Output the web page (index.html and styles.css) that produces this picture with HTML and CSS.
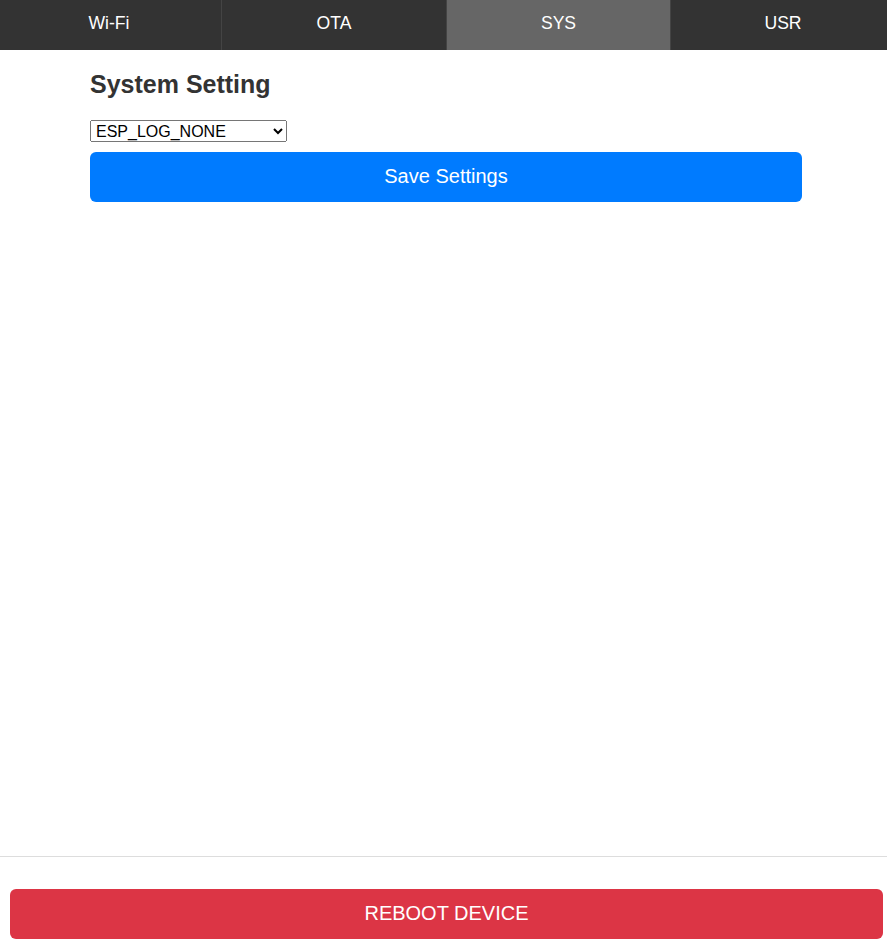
FILE: index.html
```html
<!DOCTYPE html>
<html>
<head>
<meta charset="utf-8">
<link rel="stylesheet" href="styles.css">
</head>
<body>
<div class="page">
  <nav class="tabs">
    <a class="tab tab-wifi">Wi-Fi</a>
    <a class="tab tab-ota">OTA</a>
    <a class="tab tab-sys active">SYS</a>
    <a class="tab tab-usr">USR</a>
  </nav>
  <main class="content">
    <h2 class="title">System Setting</h2>
    <select class="log-select">
      <option>ESP_LOG_NONE</option>
      <option>ESP_LOG_ERROR</option>
      <option>ESP_LOG_WARN</option>
      <option>ESP_LOG_INFO</option>
      <option>ESP_LOG_DEBUG</option>
      <option>ESP_LOG_VERBOSE</option>
    </select>
    <button class="btn btn-save">Save Settings</button>
  </main>
  <footer class="footer">
    <button class="btn btn-reboot">REBOOT DEVICE</button>
  </footer>
</div>
</body>
</html>
```
FILE: styles.css
```css
html, body {
  margin: 0;
  padding: 0;
  height: 100%;
}
body {
  font-family: "Liberation Sans", Arial, sans-serif;
  color: #333;
  background: #fff;
}
.page {
  display: flex;
  flex-direction: column;
  height: 100vh;
}
.tabs {
  display: grid;
  grid-template-columns: 222px 225px 224px 1fr;
  height: 50px;
  background: #333;
  flex: none;
}
.tab {
  display: flex;
  align-items: center;
  justify-content: center;
  padding-bottom: 4px;
  box-sizing: border-box;
  color: #fff;
  font-size: 17.6px;
  border-right: 1px solid #444;
}
.tab-wifi {
  padding-right: 3px;
}
.tab-usr {
  padding-left: 8px;
  border-right: none;
}
.tab.active {
  background: #666;
}
.content {
  flex: 1;
  width: 712px;
  margin-left: 90px;
  display: flex;
  flex-direction: column;
  align-items: flex-start;
}
.title {
  font-size: 25px;
  font-weight: bold;
  margin: 20px 0 21px;
  color: #333;
}
.log-select {
  width: 197px;
  height: 22px;
  padding-left: 1px;
  font-family: "Liberation Sans", Arial, sans-serif;
  font-size: 16px;
  color: #000;
  margin: 0 0 10px;
}
.btn {
  border: none;
  border-radius: 6px;
  color: #fff;
  font-family: "Liberation Sans", Arial, sans-serif;
  font-size: 20px;
  height: 50px;
  padding: 0 0 2px;
  cursor: pointer;
}
.btn-save {
  width: 712px;
  background: #007bff;
}
.footer {
  flex: none;
  border-top: 1px solid #ddd;
  padding: 32px 4px 13px 10px;
}
.btn-reboot {
  width: 100%;
  background: #dc3545;
}
```
